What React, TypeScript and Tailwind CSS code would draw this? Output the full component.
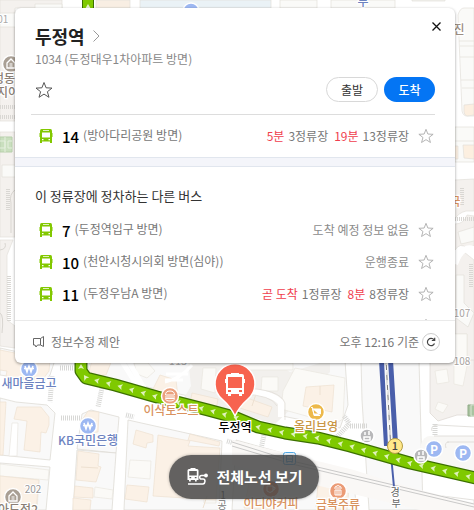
import { useState } from "react";

interface Arrival {
  time: string;
  stops: string;
}

interface BusRoute {
  no: string;
  direction: string;
  arrivals?: Arrival[];
  notice?: string;
}

const mainRoute: BusRoute = {
  no: "14",
  direction: "(방아다리공원 방면)",
  arrivals: [
    { time: "5분", stops: "3정류장" },
    { time: "19분", stops: "13정류장" },
  ],
};

const otherRoutes: BusRoute[] = [
  { no: "7", direction: "(두정역입구 방면)", notice: "도착 예정 정보 없음" },
  { no: "10", direction: "(천안시청시의회 방면(심야))", notice: "운행종료" },
  {
    no: "11",
    direction: "(두정우남A 방면)",
    arrivals: [
      { time: "곧 도착", stops: "1정류장" },
      { time: "8분", stops: "8정류장" },
    ],
  },
];

function StarIcon({ className = "" }: { className?: string }) {
  return (
    <svg viewBox="0 0 18 18" className={className} fill="none" stroke="currentColor" aria-hidden="true">
      <path d="M9 1.500l2.100 5.300 5.900.3-4.600 3.600 1.600 5.600L9 13.100l-5 3.200 1.600-5.600L1 7.100l5.900-.3z" />
    </svg>
  );
}

function BusIcon() {
  return (
    <svg viewBox="0 0 14 16" className="h-4 w-3.5 shrink-0" aria-hidden="true">
      <path
        fill="#82c800"
        fillRule="evenodd"
        d="M2.500 1h9Q13 1 13 3v12h-2v-1.500H3V15H1V3q0-2 1.500-2zM3 4.500v5h8v-5zM3 11v1.300h1.500V11zm6.500 0v1.300H11V11zM4 2.200v.8h6v-.8z"
      />
      <path fill="#82c800" d="M.500 5h1v4h-1zM12.500 5h1v4h-1z" />
    </svg>
  );
}

function FavoriteButton({ label, className = "" }: { label: string; className?: string }) {
  const [on, setOn] = useState(false);

  return (
    <button
      type="button"
      aria-label={label}
      aria-pressed={on}
      onClick={() => setOn(!on)}
      className={`shrink-0 ${className}`}
    >
      <StarIcon className="h-4 w-4" />
    </button>
  );
}

function RouteRow({ route }: { route: BusRoute }) {
  return (
    <li className="flex h-8 items-center pr-[21px] pl-6">
      <BusIcon />
      <strong className="ml-[9px] pt-0.5 text-[15px] leading-5 font-medium text-black">{route.no}</strong>
      <span className="ml-1 pb-0.5 text-xs leading-5 text-[#777]">{route.direction}</span>
      <div className="ml-auto flex items-center gap-1.5 text-xs leading-5 text-[#777]">
        {route.notice && <span className="text-[#8c8c8c]">{route.notice}</span>}
        {route.arrivals?.map((arrival) => (
          <span key={arrival.time} className="flex gap-1">
            <em className="text-[#f03e4d] not-italic">{arrival.time}</em>
            <span>{arrival.stops}</span>
          </span>
        ))}
      </div>
      <FavoriteButton label={`${route.no}번 즐겨찾기`} className="ml-[9px] text-[#aaa]" />
    </li>
  );
}

// Centre line of the bus route, drawn from the left end to the right
const routeLine: [number, number][] = [
  [81, 360],
  [81, 371],
  [86, 378],
  [115, 385],
  [157, 397],
  [208, 410],
  [234, 417],
  [258, 427],
  [285, 433],
  [318, 438],
  [350, 446],
  [410, 463],
  [480, 479],
];

function getArrows(step: number) {
  const arrows: { x: number; y: number; angle: number }[] = [];
  let rest = 7;
  for (let i = 1; i < routeLine.length; i++) {
    const [x1, y1] = routeLine[i - 1];
    const [x2, y2] = routeLine[i];
    const length = Math.hypot(x2 - x1, y2 - y1);
    while (rest < length) {
      const t = rest / length;
      arrows.push({
        x: x1 + (x2 - x1) * t,
        y: y1 + (y2 - y1) * t,
        angle: (Math.atan2(y1 - y2, x1 - x2) * 180) / Math.PI,
      });
      rest += step;
    }
    rest -= length;
  }
  return arrows;
}

const buildings = [
  "0,350 50,360 49,371 40,383 6,376 7,371 0,370",
  "0,402 6,402 3,455 0,455",
  "17,407 41,407 49,417 49,425 46,433 41,432 40,452 24,450 27,421 14,419",
  "0,476 39,480 36,510 0,510",
  "88,411 99,412 98,432 83,434 82,420",
  "78,451 99,454 98,466 101,467 96,482 76,480",
  "75,486 93,488 93,498 74,497",
  "73,498 91,500 90,510 73,510",
  "136,430 153,435 153,442 147,443 146,448 133,444",
  "127,485 149,487 147,502 125,499",
  "158,435 190,441 188,446 220,448 216,500 153,496",
  "190,434 220,442 219,446 188,440",
  "92,360 112,360 106,375 88,376",
  "160,375 176,380 178,397 152,391",
  "192,393 218,399 216,410 190,404",
  "236,394 272,407 268,417 240,408",
  "306,387 334,385 332,412 303,406",
  "250,478 277,484 274,510 244,508",
  "319,472 350,476 347,510 316,507",
];

const roadBlocks = [
  "0,348 55,360 50,375 42,384 20,378 0,375",
  "0,398 16,402 47,405 55,413 50,460 0,455",
  "0,463 50,467 46,510 0,510",
  "82,414 91,410 119,417 116,453 77,449",
  "77,450 116,453 112,510 73,510",
  "128,420 222,441 219,510 124,510",
  "90,360 345,360 348,405 340,428 230,405 87,374",
  "236,440 354,473 356,510 232,510",
  "361,360 419,360 423,510 369,510 362,400",
];

function PoiLabel({ x, y, color, children }: { x: number; y: number; color: string; children: string }) {
  return (
    <text
      x={x}
      y={y}
      fill={color}
      stroke="#fff"
      strokeWidth="2.500"
      paintOrder="stroke"
      textAnchor="middle"
      className="text-xs font-medium"
    >
      {children}
    </text>
  );
}

// Names of roads and buildings, quieter than the places
function MapNote({ x, y, color, children }: { x: number; y: number; color: string; children: string }) {
  return (
    <text
      x={x}
      y={y}
      fill={color}
      stroke="#fff"
      strokeWidth="2"
      paintOrder="stroke"
      textAnchor="middle"
      className="text-[10px]"
    >
      {children}
    </text>
  );
}

function MapBackground() {
  return (
    <svg
      viewBox="0 0 474 510"
      preserveAspectRatio="xMidYMin slice"
      className="absolute inset-0 h-full w-full"
      aria-hidden="true"
    >
      <rect width="474" height="510" fill="#fff" />

      {/* Land around the upper edge */}
      <g fill="#f4f1ee" stroke="#e2dfda" strokeWidth=".7">
        <path d="M0 0h62v8H15v113H0zM0 132h15v105H0zM0 240h13L7 255v65l8 6v22L0 346z" />
        <path fill="#fafaf8" d="M0 13h26v14H0zM2 165h13v12H2zM35 4h27v6H35z" />
        <path fill="#f8eee3" d="M96 0h34v8H96z" />
        <path fill="#eaf2f6" d="M140 0h131v8H140z" />
        <path fill="#fafaf8" d="M280 0h37v8h-37zM331 0h64v8h-64zM412 0h33v1h-33z" />
        <path fill="#fafaf8" d="M458 15q2-7 6-7h10v108h-7q-4 0-5-5z" />
        <path d="M459 41h15M460 46h15M460 57h15M461 80h15M462 88h15" />
        <path fill="#fafaf8" d="M455 127h19v35h-19zM455 141h19" />
        <path fill="#fcefe0" d="M464 105l10-1v11l-7 1q-3-1-3-4zM463 145h11v14l-10-1zM455 146h3v13h-3z" />
        <path d="M455 180l19-1v32h-8q-8 2-11 8M455 224q9 0 12-9l7 1v30l-7 2q-7-6-12 2z" />
        <path d="M455 260l9-8 10 8v103h-19z" />
        <path fill="#fafaf8" d="M458 232l16-5v14l-13 3zM456 275h8v28l10 10-6 14-12-9zM455 334h12v26h-12z" />
        <path fill="none" stroke="#fff" strokeWidth="6" d="M455 264q8-22 22-13" />
      </g>
      <path d="M0 137h12v15H0z" fill="#c9dfbe" stroke="#b7cfab" />
      <path d="M0 141h5v7H0M5 137v15M12 141H8v7h4" fill="none" stroke="#e5efde" />
      <g stroke="#d9d7d3" strokeWidth="4" strokeDasharray="1 1" fill="none">
        <path d="M0 107h15M0 117h15M8 189v22M9 276v46M455 219h19M462 188v18M471 264v24" />
      </g>
      <path d="M15 190q-6 4-4 13v30M0 250q7-1 5-7M0 313q4 2 2 20" fill="none" stroke="#d8d5d0" />

      {/* City blocks */}
      <g fill="#f9f9f9" stroke="#dedcd5" strokeWidth=".8">
        {roadBlocks.map((points) => (
          <polygon key={points} points={points} />
        ))}
      </g>
      <path d="M188 360h84l18 12 40-12v12l-55 52-31-9-60-17 7-12z" fill="#f2f0ed" />
      <path
        d="M430 360h44v55h-17l-19 6-8-8z"
        fill="#f4f1ee"
        stroke="#dfdbd5"
        strokeWidth=".8"
      />
      <g fill="#fbfaf7" stroke="#eae6df" strokeWidth=".7">
        <path d="M203 368h13l-1 25-14-4zM234 363h59v7h-59zM262 377h16v14h-17z" />
        <path d="M454 334h13v32l-4 20-9-2zM435 371l12-2 2 13-12 2zM438 402l10 3-5 8-8-4z" />
        <path d="M22 478l17 2-2 30H20zM0 464l49 6-1 10-48-4z" />
        <path d="M130 460l21 1-1 18-22-2zM95 487l18 3-1 9-18-2zM134 363h14l7 8-8 7-10-4zM204 486h12v17h-12z" />
        <path d="M283 391l12-23 50 10-2 41-8 5-54-15z" />
      </g>
      <g fill="#fbf1e6" stroke="#eee1d1" strokeWidth=".7">
        {buildings.map((points) => (
          <polygon key={points} points={points} />
        ))}
      </g>
      <path d="M81 467l17 1M207 496l-4 12M256 394l-4 12M320 386v9" stroke="#eee1d1" fill="none" />
      <path d="M12 423h6l-1 33H9z" fill="#fff" stroke="#e8e5df" strokeWidth=".7" />
      <path d="M128 360l17 30M121 360l17 27" stroke="#fff" strokeWidth="5" />
      <path d="M244 391q30 2 37 12v14" fill="none" stroke="#fff" strokeWidth="6" />
      <path d="M165 382q15-3 27-17M166 374h22M165 380h18" fill="none" stroke="#fff" strokeWidth="3" />
      <path d="M242 388q38 1 43 15v17M242 394q30 1 35 12" fill="none" stroke="#dfdbd5" strokeWidth=".7" />
      <text x="178" y="365" fill="#aaa" className="text-[11px]" textAnchor="middle">
        115
      </text>
      <path d="M468 405h8v11h-8z" fill="#a9c3a0" stroke="#8faa86" />
      <path d="M474 405h-3v11h3" fill="none" stroke="#dbe7d5" />
      <path d="M420 470q-3-34 10-34h44v44z" fill="#f8f7f5" />
      <path
        d="M434 436h40M432 431q-2-5 5-6l37 2M447 442h27M446 448q-2-6 3-6M442 496l32 4v10h-34z"
        fill="none"
        stroke="#dcd9d4"
        strokeWidth=".8"
      />

      {/* Pedestrian crossings */}
      <g stroke="#d8d8d6" strokeWidth="5" strokeDasharray="1 1" fill="none">
        <path d="M60 368h14M61 418h20M52 376l-2 26M102 388l-4 19M126 415l8 2M227 441l10 3M264 435l-3 14M336 438l14-15M350 426h17M349 423l-5-7M435 424v12M443 500v10" />
      </g>

      {/* Railway */}
      <path d="M232 440l122 30q60 20 120 33v7H420L232 465z" fill="#faf8f6" />
      <path d="M232 442l60 19 182 43M232 446l60 18 182 43" fill="none" stroke="#bdbdbd" strokeWidth=".8" />
      <path d="M379 360h5l4 86h-4zM388 360h5l5 84h-5z" fill="#4a5fab" />
      <path d="M386 360l5 92" stroke="#777" />
      <path d="M386 360l5 92" stroke="#fff" strokeDasharray="5 5" />
      <path d="M391 455l3 32" stroke="#4a5fab" strokeWidth="2" />

      {/* Bus route */}
      <path d="M82-1h12V9H82z" fill="#3c7000" />
      <path d="M83-1h10V9H83z" fill="#7fc900" />
      <path d="M88 4l3 5h-6z" fill="#fff" opacity=".8" />
      <g fill="none" strokeLinejoin="round">
        <polyline points={routeLine.join(" ")} stroke="#3c7000" strokeWidth="13" />
        <polyline points={routeLine.join(" ")} stroke="#7fc900" strokeWidth="10.500" />
      </g>
      {getArrows(12).map(({ x, y, angle }) => (
        <path
          key={x + y}
          d="M3 0l-5 3 1-3-1-3z"
          fill="#dff2bb"
          transform={`translate(${x} ${y}) rotate(${angle})`}
        />
      ))}

      {/* Places */}
      <g fill="#9db8f2" stroke="#fff" strokeWidth="1.500">
        <circle cx="29" cy="369" r="8.500" />
        <circle cx="88" cy="426" r="8.500" />
        <circle cx="191" cy="11" r="8" />
        <circle cx="434" cy="449" r="8.500" />
        <circle cx="463" cy="453" r="8.500" />
      </g>
      <g fill="none" stroke="#fff" strokeWidth="1.500">
        <path d="M25 366l2 6 2-6 2 6 2-6M24 368.500h10M84 423l2 6 2-6 2 6 2-6M83 425.500h10" />
      </g>
      <g fill="#fff" textAnchor="middle" className="text-xs font-bold">
        <text x="434" y="454">P</text>
        <text x="463" y="458">P</text>
      </g>
      <g fill="#a99f94" stroke="#fff" strokeWidth="1.500">
        <circle cx="11" cy="64" r="8.500" />
        <circle cx="13" cy="497" r="8.500" />
      </g>
      <path
        d="M7 63l4-4 4 4v5H7zM9 496l4-4 4 4v5H9z"
        fill="none"
        stroke="#fff"
        strokeWidth="1.300"
      />
      <path d="M9.500 64h3m-3 2h3M11.500 497h3m-3 2h3" stroke="#fff" />
      <g stroke="#fff" strokeWidth="1.500">
        <circle cx="170" cy="396" r="8.500" fill="#eba17e" />
        <circle cx="316" cy="412" r="8.500" fill="#edb94a" />
        <circle cx="271" cy="489" r="8.500" fill="#e8875f" />
        <circle cx="338" cy="491" r="8.500" fill="#eb9b76" />
        <circle cx="367" cy="436" r="7" fill="#b8b8ba" />
        <circle cx="421" cy="456" r="7" fill="#b8b8ba" />
      </g>
      <path d="M165.500 395q0-4 4.500-4t4.500 4zM165.500 398.500h9q0 2.500-4.500 2.500t-4.500-2.500zM165 397h10" fill="none" stroke="#fff" />
      <path d="M312.500 409h8v5h-6.500zM311 407.500h1.500l1.500 8h6" fill="#fff" stroke="#fff" />
      <path d="M334 488h8M335 490h6v5h-6zM337 490v5m2-5v5M335 487q3-3 6 0" fill="none" stroke="#fff" />
      <path d="M267 486h6v5q-3 3-6 0zm6 1q3 0 2 2l-2 1" fill="none" stroke="#fff" />
      <path
        d="M364 437h6v3h-6zM365 432v3m4-4v4M418 457h6v3h-6zM419 452v3m4-4v4"
        fill="none"
        stroke="#fff"
        strokeWidth="1.500"
      />
      <circle cx="395" cy="446" r="7.500" fill="#ffe88a" stroke="#b59d43" />
      <text x="395" y="450" textAnchor="middle" fill="#444" className="text-[11px] font-medium">
        1
      </text>
      <g fill="none" stroke="#4fa9e8">
        <rect x="283.500" y="452.500" width="12" height="12" rx="2" fill="#eef7fd" />
        <path d="M286.500 455.500h6v6h-6zM286 459h7M287 461v2m5-2v2" />
      </g>

      <PoiLabel x={29} y={388} color="#6c82bf">새마을금고</PoiLabel>
      <PoiLabel x={88} y={445} color="#6c82bf">KB국민은행</PoiLabel>
      <PoiLabel x={171} y={415} color="#d9925e">이삭토스트</PoiLabel>
      <PoiLabel x={316} y={431} color="#c99645">올리브영</PoiLabel>
      <PoiLabel x={271} y={508} color="#d9925e">이디야커피</PoiLabel>
      <PoiLabel x={338} y={509} color="#d9925e">금복주류</PoiLabel>
      <MapNote x={33} y={493} color="#999">202</MapNote>
      <PoiLabel x={18} y={514} color="#8b7f76">아도정2</PoiLabel>
      <PoiLabel x={4} y={83} color="#8b7f76">정동</PoiLabel>
      <PoiLabel x={8} y={97} color="#8b7f76">지이</PoiLabel>
      <MapNote x={0} y={23} color="#aaa">101</MapNote>
      <PoiLabel x={459} y={34} color="#9b8e83">진</PoiLabel>
      <PoiLabel x={455} y={206} color="#d9925e">국</PoiLabel>
      <MapNote x={462} y={317} color="#a8a39f">107</MapNote>
      <MapNote x={462} y={365} color="#a8a39f">108</MapNote>
      <PoiLabel x={363} y={6} color="#6c82bf">부</PoiLabel>
      <MapNote x={395} y={496} color="#666">경</MapNote>
      <MapNote x={396} y={507} color="#666">부</MapNote>
      <MapNote x={223} y={499} color="#444">1</MapNote>
      <MapNote x={222} y={509} color="#777">공</MapNote>

      {/* Stop marker */}
      <path
        d="M235 416q-4-9-13-17a20 20 0 1 1 26 0q-9 8-13 17z"
        fill="#f7634f"
        stroke="#fff"
        strokeWidth="1.500"
      />
      <path
        fill="#fff"
        fillRule="evenodd"
        d="M228 374h3v-1h8v1h3q2 0 2 2v18h-2v2h-3v-2h-8v2h-3v-2h-2v-18q0-2 2-2zM228 377v11h14v-11zM228 390v2h3v-2zm11 0v2h3v-2z"
      />
      <path fill="#fff" d="M225 379h1v4h-1zM244 379h1v4h-1z" />
      <PoiLabel x={235} y={432} color="#000">두정역</PoiLabel>
    </svg>
  );
}

export default function App() {
  return (
    <main className="relative flex min-h-screen flex-col overflow-hidden font-['Noto_Sans_CJK_KR',sans-serif]">
      <MapBackground />

      <section className="relative mt-2 mr-[19px] ml-[15px] rounded-md bg-white shadow-[0_1px_3px_rgba(0,0,0,0.4)]">
        <header className="px-5 pt-3.5 pb-3">
          <h1 className="text-lg leading-7 font-bold text-[#222]">
            <a href="#stop" className="inline-flex items-center gap-2">
              두정역
              <svg viewBox="0 0 7 12" className="h-3 w-[7px]" fill="none" stroke="#999" aria-hidden="true">
                <path d="M.5.5L6 6 .5 11.500" />
              </svg>
            </a>
          </h1>
          <p className="text-xs leading-[18px] text-[#888]">1034 (두정대우1차아파트 방면)</p>
          <div className="mt-[9px] flex items-center gap-1.5">
            <button type="button" aria-label="정류장 즐겨찾기" className="mr-auto text-[#555]">
              <StarIcon className="h-[18px] w-[18px]" />
            </button>
            <button
              type="button"
              className="h-[25px] w-[52px] rounded-full border border-[#d8d8d8] text-xs leading-5 text-[#333]"
            >
              출발
            </button>
            <button
              type="button"
              className="h-[25px] w-[51px] rounded-full bg-[#0475f4] text-xs leading-5 font-medium text-white"
            >
              도착
            </button>
          </div>
        </header>
        <button type="button" aria-label="닫기" className="absolute top-3.5 right-3.5">
          <svg viewBox="0 0 9 9" className="h-[9px] w-[9px]" stroke="#111" strokeWidth="1.300" aria-hidden="true">
            <path d="M.5.5l8 8M8.500.5l-8 8" />
          </svg>
        </button>

        <hr className="mr-5 ml-4 border-[#ddd]" />
        <ul className="py-[5px]">
          <RouteRow route={mainRoute} />
        </ul>

        <div className="h-2.5 border-y border-[#e1e6ee] bg-[#f4f5fa]" />

        <div className="h-[153px] overflow-hidden">
          <h2 className="px-5 pt-5 pb-[9px] text-[13px] leading-[18px] text-[#333]">
            이 정류장에 정차하는 다른 버스
          </h2>
          <ul>
            {otherRoutes.map((route) => (
              <RouteRow key={route.no} route={route} />
            ))}
            <li className="flex h-8 items-center justify-end pr-[21px]">
              <FavoriteButton label="즐겨찾기" className="text-[#aaa]" />
            </li>
          </ul>
        </div>

        <footer className="flex h-[43px] items-center border-t border-[#eaeaea] pr-[15px] pl-[18px] text-xs text-[#777]">
          <button type="button" className="flex items-center gap-[7px]">
            <svg viewBox="0 0 11 12" className="h-3 w-[11px]" fill="none" stroke="#666" aria-hidden="true">
              <path d="M.5 2.500h7L10.500.5v10l-3-1.500H4.500l-1.500 2-1-2H.5zM7.500 2.500v6.500" />
            </svg>
            정보수정 제안
          </button>
          <span className="ml-auto">오후 12:16 기준</span>
          <button
            type="button"
            aria-label="새로고침"
            className="ml-[3px] flex h-[18px] w-[18px] items-center justify-center rounded-full border border-[#ccc]"
          >
            <svg viewBox="0 0 10 10" className="h-2.5 w-2.5" fill="none" stroke="#444" strokeWidth="1.200" aria-hidden="true">
              <path d="M8.500 6.500A3.700 3.700 0 1 1 8 2.700M8.700.8v2.700H5.800" />
            </svg>
          </button>
        </footer>
      </section>

      <button
        type="button"
        className="relative mt-auto mb-[11px] ml-3.5 flex h-11 items-center gap-2 self-center rounded-full bg-[#484848]/85 pr-4 pl-[18px] text-[15px] font-bold text-white shadow-[0_0_3px_rgba(0,0,0,0.3)]"
      >
        <svg viewBox="0 0 21 18" className="h-[18px] w-[21px]" aria-hidden="true">
          <path
            fill="#fff"
            fillRule="evenodd"
            d="M2 1h1.500V0h5v1H10q1.500 0 1.500 1.500V12h-1.800v1.500H8V12H3.800v1.500H2V12H.5V2.500Q.5 1 2 1zm.2 2v4.500h7.600V3zM2.500 9v1.300h1.700V9zm5.300 0v1.300h1.700V9z"
          />
          <path
            d="M19 7.500h-4.500q-1.800 0-1.800 1.800t1.800 1.700h1.500q2 0 2 2.200t-2 2.800H1"
            fill="none"
            stroke="#fff"
            strokeWidth="1.500"
          />
          <circle cx="19" cy="7.500" r="1.900" fill="#fff" />
        </svg>
        전체노선 보기
      </button>
    </main>
  );
}
